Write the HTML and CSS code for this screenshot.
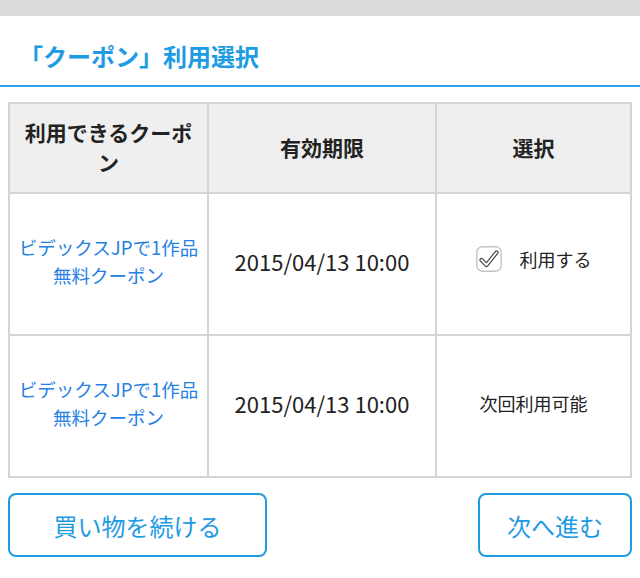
FILE: index.html
```html
<!DOCTYPE html>
<html lang="ja">
<head>
    <meta charset="UTF-8">
    <meta name="viewport" content="width=device-width, initial-scale=1.0">
    <title>クーポン利用選択</title>
    <link rel="stylesheet" href="styles.css">
</head>
<body>
    <div class="top-bar"></div>

    <h1 class="page-title">「クーポン」利用選択</h1>

    <div class="content">
        <table class="coupon-table">
            <colgroup>
                <col class="col-name">
                <col class="col-date">
                <col class="col-select">
            </colgroup>
            <tr class="head-row">
                <th>利用できるクーポン</th>
                <th>有効期限</th>
                <th>選択</th>
            </tr>
            <tr class="body-row">
                <td><a href="#" class="coupon-link">ビデックスJPで1作品<br>無料クーポン</a></td>
                <td class="date">2015/04/13 10:00</td>
                <td>
                    <label class="use-check">
                        <svg class="check-box" width="26" height="26" viewBox="0 0 26 26">
                            <rect x="0.8" y="0.8" width="24.4" height="24.4" rx="5.5" fill="#fff" stroke="#c4c4c4" stroke-width="1.4"/>
                            <path d="M5.5 14 L10.5 19 L20.5 6.5" fill="none" stroke="#444" stroke-width="4.2" stroke-linecap="round" stroke-linejoin="round"/>
                            <path d="M5.5 14 L10.5 19 L20.5 6.5" fill="none" stroke="#fff" stroke-width="1.9" stroke-linecap="round" stroke-linejoin="round"/>
                        </svg>
                        <span>利用する</span>
                    </label>
                </td>
            </tr>
            <tr class="body-row">
                <td><a href="#" class="coupon-link">ビデックスJPで1作品<br>無料クーポン</a></td>
                <td class="date">2015/04/13 10:00</td>
                <td>次回利用可能</td>
            </tr>
        </table>

        <div class="buttons">
            <a href="#" class="btn btn-back">買い物を続ける</a>
            <a href="#" class="btn btn-next">次へ進む</a>
        </div>
    </div>
</body>
</html>
```

FILE: styles.css
```css
* {
    margin: 0;
    padding: 0;
    box-sizing: border-box;
}

body {
    font-family: "Noto Sans CJK JP", "Noto Sans", sans-serif;
    color: #222;
    background: #fff;
}

.top-bar {
    height: 16px;
    background: #dcdcdc;
}

.page-title {
    font-size: 24px;
    font-weight: 700;
    line-height: 32px;
    color: #1d9be3;
    padding: 24px 0 13px 19px;
    border-bottom: 2px solid #2aa4e8;
}

.content {
    padding: 15px 8px 0;
}

.coupon-table {
    width: 100%;
    border-collapse: collapse;
    table-layout: fixed;
    border: 2px solid #d4d4d4;
}

.col-name {
    width: 199px;
}

.col-date {
    width: 228px;
}

.coupon-table th,
.coupon-table td {
    border: 2px solid #d4d4d4;
    text-align: center;
    vertical-align: middle;
    padding: 0 10px 6px;
}

.head-row {
    height: 90px;
}

.coupon-table th {
    background: #efefef;
    font-size: 21px;
    font-weight: 700;
    line-height: 30px;
    padding-bottom: 3px;
}

.body-row {
    height: 142px;
}

.coupon-table td {
    font-size: 18px;
    line-height: 28px;
}

.coupon-table td.date {
    font-size: 22px;
}

.coupon-link {
    color: #2580e4;
    font-size: 18.5px;
    text-decoration: none;
    display: block;
    margin: 0 -9px;
}

.use-check {
    display: inline-flex;
    align-items: center;
    gap: 18px;
}

.check-box {
    display: block;
}

.buttons {
    display: flex;
    justify-content: space-between;
    margin-top: 15px;
}

.btn {
    display: flex;
    align-items: center;
    justify-content: center;
    height: 64px;
    border: 2px solid #1d9be3;
    border-radius: 8px;
    color: #1d9be3;
    font-size: 24px;
    text-decoration: none;
}

.btn-back {
    width: 259px;
}

.btn-next {
    width: 154px;
}
```
